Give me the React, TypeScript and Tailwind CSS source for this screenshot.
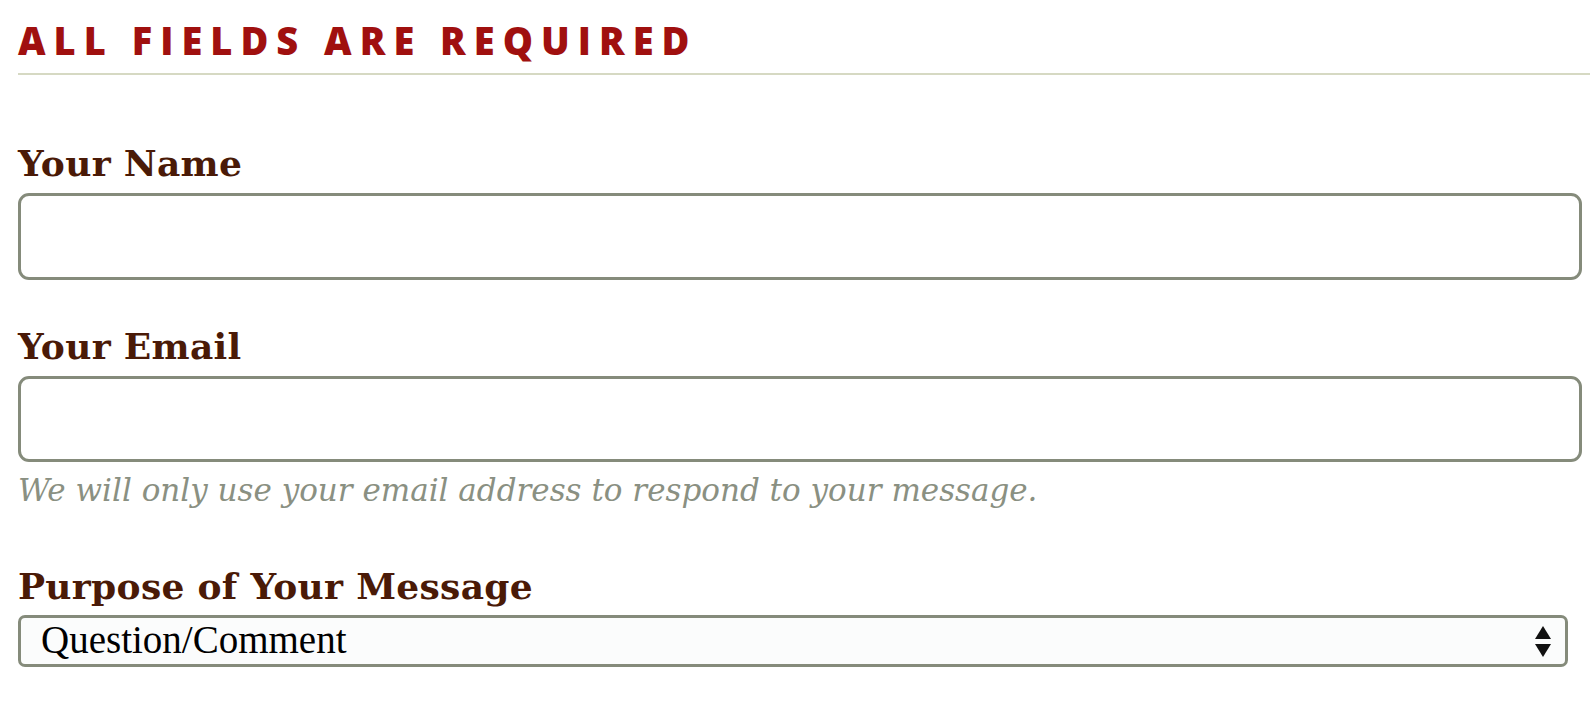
import { useState } from 'react';

const labelClass =
  "block text-[36px] leading-[40px] font-bold tracking-[0.3px] text-[#4a1a07] font-['DejaVu_Serif',serif]";
const inputClass =
  'block w-full rounded-[11px] border-[3px] border-[#858b7b] bg-white outline-none';

export default function App() {
  const [purpose, setPurpose] = useState('Question/Comment');

  return (
    <div className="min-h-screen bg-white pt-[20px] pl-[18px]">
      <div className="pb-[13px] border-b-2 border-[#d6d9c3]">
        <h2 className="text-[38px] leading-[40px] font-extrabold tracking-[8px] text-[#a0100f] font-['Open_Sans',sans-serif]">
          ALL FIELDS ARE REQUIRED
        </h2>
      </div>

      <form className="pr-[8px]">
        {/* Name */}
        <label className={`${labelClass} mt-[68px]`}>Your Name</label>
        <input type="text" className={`${inputClass} mt-[10px] h-[87px]`} />

        {/* Email */}
        <label className={`${labelClass} mt-[46px]`}>Your Email</label>
        <input type="email" className={`${inputClass} mt-[10px] h-[86px]`} />
        <p className="mt-[10px] text-[31px] leading-[36px] italic text-[#8a9082] font-['DejaVu_Serif',serif]">
          We will only use your email address to respond to your message.
        </p>

        {/* Purpose */}
        <label className={`${labelClass} mt-[58px]`}>Purpose of Your Message</label>
        <div className="relative mt-[9px] mr-[14px]">
          <select
            value={purpose}
            onChange={(e) => setPurpose(e.target.value)}
            className="block w-full h-[52px] appearance-none rounded-[7px] border-[3px] border-[#858b7b] bg-[#fbfcfc] pl-[20px] pb-[3px] text-[39px] leading-[40px] text-black outline-none font-['Liberation_Serif',serif]"
          >
            <option>Question/Comment</option>
            <option>Suggestion</option>
            <option>Other</option>
          </select>
          <svg
            className="pointer-events-none absolute right-[17px] top-[11px]"
            width="16"
            height="31"
            viewBox="0 0 16 31"
          >
            <path d="M8 0 L16 13 L0 13 Z" fill="#111" />
            <path d="M0 18 L16 18 L8 31 Z" fill="#111" />
          </svg>
        </div>
      </form>
    </div>
  );
}
